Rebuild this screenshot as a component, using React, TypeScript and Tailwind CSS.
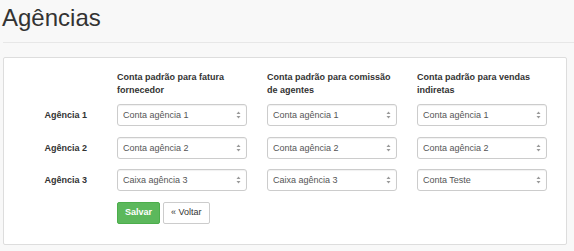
const columns = [
  "Conta padrão para fatura fornecedor",
  "Conta padrão para comissão de agentes",
  "Conta padrão para vendas indiretas",
];

const rows = [
  { label: "Agência 1", values: ["Conta agência 1", "Conta agência 1", "Conta agência 1"] },
  { label: "Agência 2", values: ["Conta agência 2", "Conta agência 2", "Conta agência 2"] },
  { label: "Agência 3", values: ["Caixa agência 3", "Caixa agência 3", "Conta Teste"] },
];

const SelectBox = ({ value }: { value: string }) => {
  return (
    <div className="relative h-[22px] w-[130px]">
      <select
        defaultValue={value}
        className="block h-[22px] w-full appearance-none rounded-[3px] border border-[#cccccc] bg-white pl-[5px] text-[9px] leading-[20px] text-[#555555] shadow-[inset_0_1px_1px_rgba(0,0,0,0.06)] outline-none"
      >
        <option>{value}</option>
      </select>
      <svg
        className="pointer-events-none absolute right-[6px] top-[7px]"
        width="5"
        height="8"
        viewBox="0 0 5 8"
      >
        <path d="M2.5 0.5 L4.5 3 L0.5 3 Z" fill="#999999" />
        <path d="M0.5 5 L4.5 5 L2.5 7.5 Z" fill="#999999" />
      </svg>
    </div>
  );
};

const App = () => {
  return (
    <div className="min-h-screen bg-[#f8f8f8] font-['Liberation_Sans',Arial,sans-serif] text-[#333333]">
      <h1 className="pl-[2px] pt-[6px] text-[24px] font-normal leading-[24px]">Agências</h1>
      <div className="ml-[3px] mt-[12px] border-b border-[#e7e7e7]"></div>

      <div className="ml-[3px] mr-[7px] mt-[14px] rounded-[2px] border border-[#dddddd] bg-white pb-[20px] pt-[13px]">
        <div className="grid grid-cols-[93px_130px_130px_130px] gap-x-[20px]">
          <div></div>
          {columns.map((c) => (
            <div key={c} className="text-[9px] font-bold leading-[12.5px]">
              {c}
            </div>
          ))}
        </div>

        <div className="mt-[8px] flex flex-col gap-[10.5px]">
          {rows.map((r) => (
            <div key={r.label} className="grid grid-cols-[93px_130px_130px_130px] items-center gap-x-[20px]">
              <div className="pr-[10px] text-right text-[9px] font-bold leading-[12px]">{r.label}</div>
              {r.values.map((v, i) => (
                <SelectBox key={i} value={v} />
              ))}
            </div>
          ))}
        </div>

        <div className="mt-[11px] flex gap-[3px] pl-[113px]">
          <button className="h-[22px] rounded-[2px] border border-[#4cae4c] bg-[#5cb85c] px-[7px] text-[9px] font-bold text-white">
            Salvar
          </button>
          <button className="h-[22px] rounded-[2px] border border-[#cccccc] bg-white px-[7px] text-[9px] text-[#333333]">
            « Voltar
          </button>
        </div>
      </div>
    </div>
  );
};

export default App;
